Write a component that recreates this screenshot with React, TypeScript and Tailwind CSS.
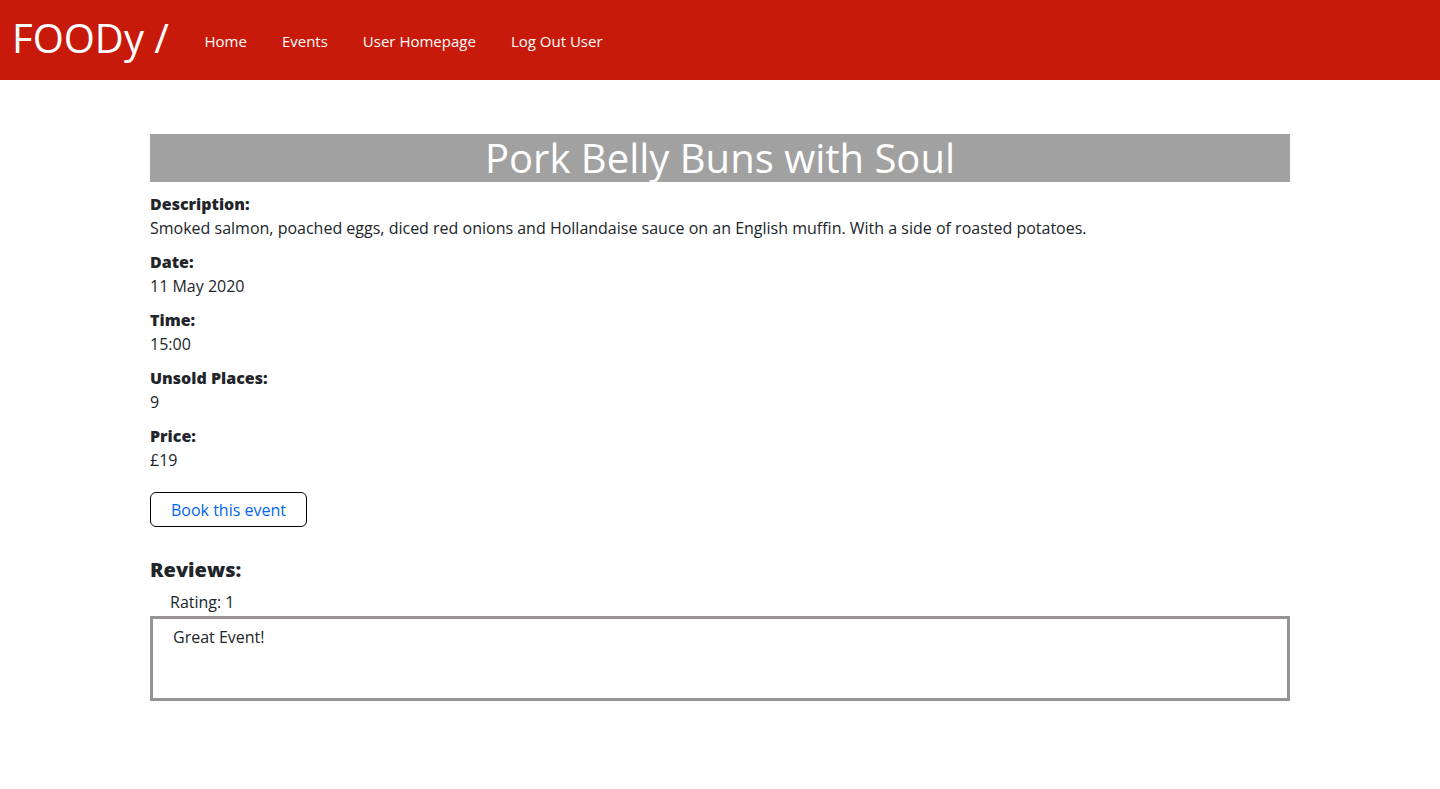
export default function App() {
  const fields = [
    {
      label: 'Description:',
      value:
        'Smoked salmon, poached eggs, diced red onions and Hollandaise sauce on an English muffin. With a side of roasted potatoes.',
    },
    { label: 'Date:', value: '11 May 2020' },
    { label: 'Time:', value: '15:00' },
    { label: 'Unsold Places:', value: '9' },
    { label: 'Price:', value: '£19' },
  ]

  return (
    <div className="min-h-screen bg-white font-['Open_Sans',sans-serif] text-[#212529]">
      <header className="flex h-20 items-center bg-[#c81a0a] px-3">
        <a href="#" className="text-[40px] leading-none text-white mr-[18px] -mt-1">
          FOODy /
        </a>
        <nav className="mt-[2px] flex items-center">
          <a href="#" className="px-[17.5px] text-[15px] text-white">Home</a>
          <a href="#" className="px-[17.5px] text-[15px] text-white">Events</a>
          <a href="#" className="px-[17.5px] text-[15px] text-white">User Homepage</a>
          <a href="#" className="px-[17.5px] text-[15px] text-white">Log Out User</a>
        </nav>
      </header>

      <main className="mx-auto w-[1140px] pt-[54px]">
        <h1 className="h-12 bg-[#a1a1a1] text-center text-[40px] leading-[48px] text-white">
          Pork Belly Buns with Soul
        </h1>

        <div className="mt-[10px] flex flex-col gap-[10px]">
          {fields.map((f) => (
            <div key={f.label}>
              <p className="text-base font-extrabold leading-6">{f.label}</p>
              <p className="text-base leading-6">{f.value}</p>
            </div>
          ))}
        </div>

        <button className="mt-[20px] h-[35px] w-[157px] rounded-[6px] border border-black bg-white text-base text-[#0066ee]">
          Book this event
        </button>

        <h2 className="mt-[29px] text-xl font-extrabold leading-7">Reviews:</h2>
        <p className="mt-[6px] pl-5 text-base leading-6">Rating: 1</p>
        <div className="mt-[2px] h-[85px] border-[3px] border-[#979393] px-5 pt-[6px]">
          <p className="text-base leading-6">Great Event!</p>
        </div>
      </main>
    </div>
  )
}
